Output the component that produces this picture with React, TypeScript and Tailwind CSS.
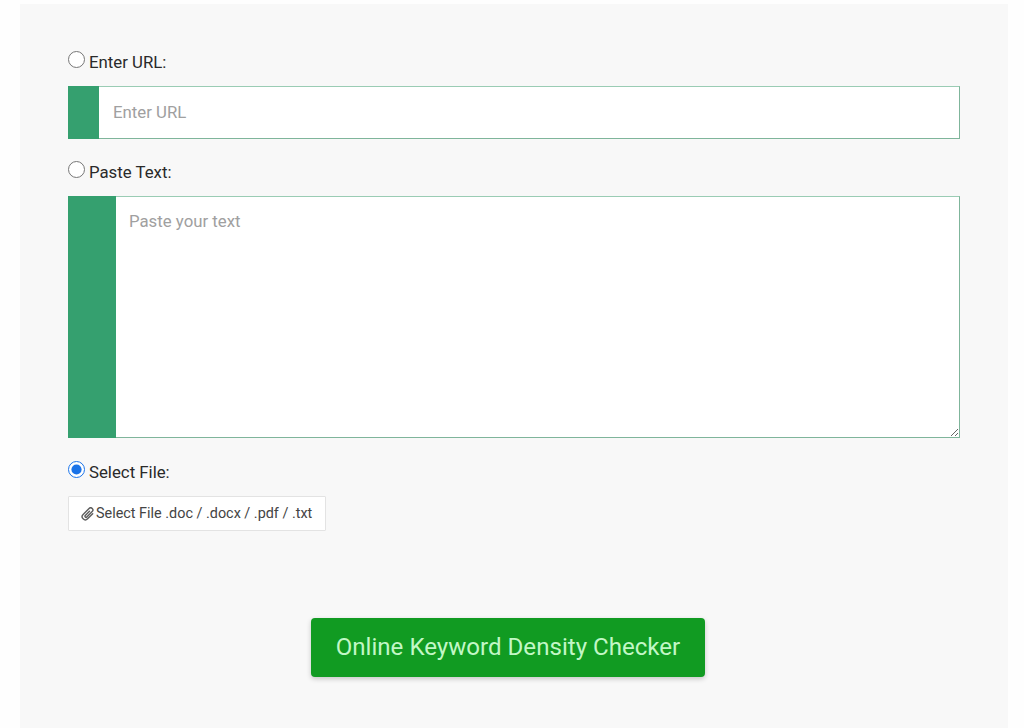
import React from "react";

function RadioLabel({ text, checked }: { text: string; checked?: boolean }) {
  return (
    <label className="flex h-[24px] items-start text-[16.8px] leading-[24px] text-[#2a2a2a]">
      <input
        type="radio"
        name="source"
        defaultChecked={checked}
        className="m-0 mr-[4px] h-[17px] w-[17px] accent-[#1a73e8]"
      />
      <span className="mt-[-1px]">{text}</span>
    </label>
  );
}

export default function App() {
  return (
    <div className="h-[728px] w-[1024px] overflow-hidden bg-[#fefefe] pl-[20px] pr-[16px] pt-[4px] font-['Roboto',sans-serif]">
      <div className="h-[724px] bg-[#f8f8f8] pl-[48px] pr-[48px] pt-[47px]">
        <RadioLabel text="Enter URL:" />
        <div className="mt-[11px] flex h-[53px] w-[892px] border border-[#7fb59b] border-t-[#9accb4] bg-white">
          <div className="ml-[-1px] mt-[-1px] h-[53px] w-[31px] shrink-0 bg-[#35a06f]" />
          <input
            type="text"
            placeholder="Enter URL"
            className="h-full min-w-0 flex-1 bg-white pb-[2px] pl-[14px] text-[16.8px] text-[#212529] outline-none placeholder:text-[#a0a0a0]"
          />
        </div>

        <div className="mt-[22px]">
          <RadioLabel text="Paste Text:" />
        </div>
        <div className="mt-[11px] flex h-[242px] w-[892px] border border-[#7fb59b] border-t-[#9accb4] bg-white">
          <div className="ml-[-1px] mt-[-1px] h-[242px] w-[48px] shrink-0 bg-[#35a06f]" />
          <textarea
            placeholder="Paste your text"
            className="h-full min-w-0 flex-1 resize bg-white pl-[13px] pt-[12px] text-[16.8px] leading-[24px] text-[#212529] outline-none placeholder:text-[#a0a0a0]"
          />
        </div>

        <div className="mt-[23px]">
          <RadioLabel text="Select File:" checked />
        </div>
        <div className="mt-[11px] flex h-[35px] w-[258px] items-center gap-[1px] rounded-[1px] border border-[#e3e3e3] bg-white pl-[12px] pt-[1px] text-[14.4px] text-[#444444]">
          <svg width="14" height="14" viewBox="1 1 12 12" fill="none" stroke="#5c5c5c" strokeWidth="1.2" strokeLinecap="round" className="shrink-0">
            <g transform="rotate(45 7 7)">
              <path d="M9.7 4v6.2a2.7 2.7 0 0 1-5.4 0V3a1.9 1.9 0 0 1 3.8 0v6.6a.9.9 0 0 1-1.8 0V4.5" />
            </g>
          </svg>
          <span>Select File .doc / .docx / .pdf / .txt</span>
        </div>

        <div className="mt-[87px] flex justify-center">
          <button
            type="button"
            className="ml-[-12px] flex h-[59px] w-[394px] items-center justify-center rounded-[4px] bg-[#119b22] text-[24.1px] text-[#c2f7c6] shadow-[0_2px_5px_rgba(0,0,0,0.2)]"
          >
            Online Keyword Density Checker
          </button>
        </div>
      </div>
    </div>
  );
}
